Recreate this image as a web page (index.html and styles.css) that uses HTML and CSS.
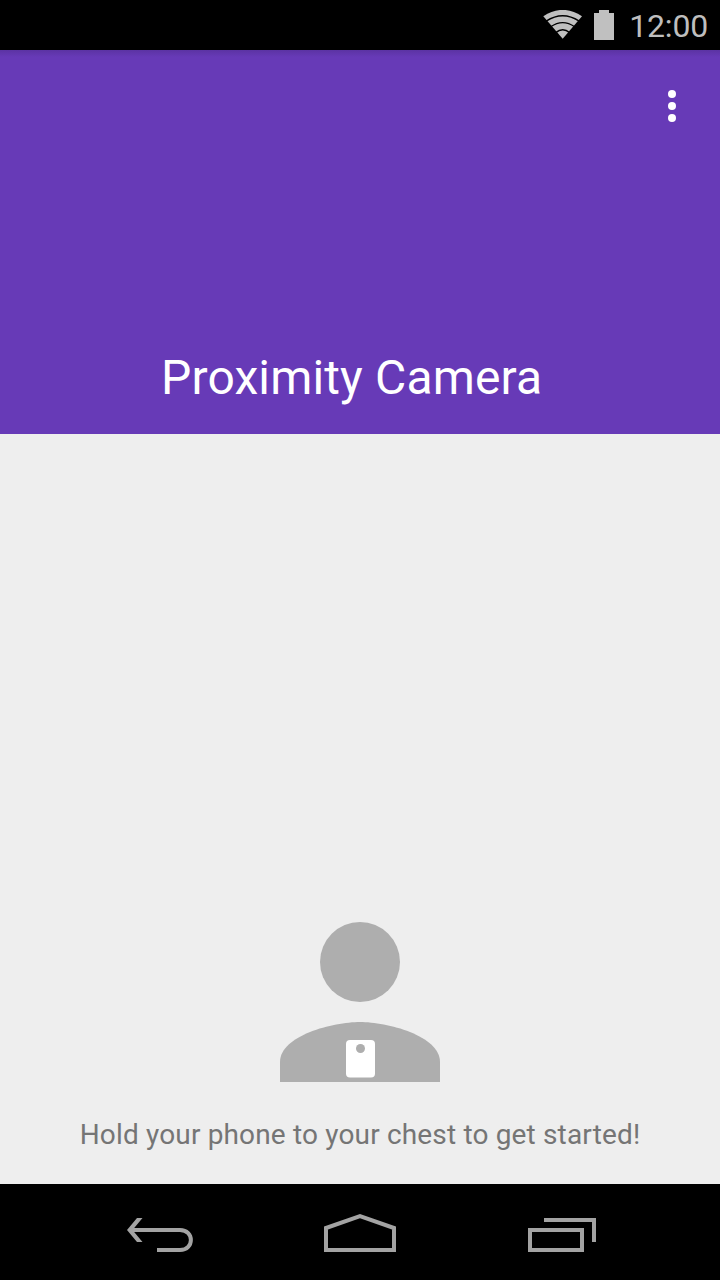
FILE: index.html
```
<!DOCTYPE html>
<html lang="en">
<head>
    <meta charset="UTF-8">
    <meta name="viewport" content="width=device-width, initial-scale=1.0">
    <title>Proximity Camera</title>
    <link rel="stylesheet" href="styles.css">
</head>
<body>
    <div class="status-bar">
        <svg class="wifi" width="40" height="30" viewBox="0 0 40 30">
            <path class="signal" d="M19.7 28.8 L0.3 6.3 Q19.7 -6.6 39 6.3 Z"/>
            <path class="gap" d="M3.2 11.2 Q19.7 0.4 36.2 11.2 M7.7 16.8 Q19.7 8.4 31.7 16.8 M12.7 22.6 Q19.7 17 26.7 22.6"/>
        </svg>
        <svg class="battery" width="20" height="30" viewBox="0 0 20 30">
            <path class="signal" d="M5 0 H15 V3 H20 V30 H0 V3 H5 Z"/>
        </svg>
        <span class="clock">12:00</span>
    </div>

    <header class="app-bar">
        <button class="menu-button" aria-label="More options">
            <svg width="8" height="32" viewBox="0 0 8 32">
                <circle cx="4" cy="4" r="4"/>
                <circle cx="4" cy="16" r="4"/>
                <circle cx="4" cy="28" r="4"/>
            </svg>
        </button>
        <h1>Proximity Camera</h1>
    </header>

    <main class="content">
        <svg class="person" width="160" height="160" viewBox="0 0 160 160">
            <circle class="body-shape" cx="80" cy="40" r="40"/>
            <path class="body-shape" d="M80 100 C53.3 100 0 113.4 0 140 V160 H160 V140 C160 113.4 106.7 100 80 100 Z"/>
            <rect class="phone" x="66" y="118" width="29" height="37.5" rx="4"/>
            <circle class="body-shape" cx="80.5" cy="126.5" r="4.5"/>
        </svg>
        <p class="hint">Hold your phone to your chest to get started!</p>
    </main>

    <nav class="nav-bar">
        <svg width="66" height="40" viewBox="0 0 66 40">
            <path class="filled" d="M0 18 L10 6 H15.5 L5.5 18 L15.5 30 H10 Z"/>
            <path d="M4 18 H53 C67.5 18 67.5 38 53 38 H30"/>
        </svg>
        <svg width="72" height="40" viewBox="0 0 72 40">
            <path d="M2 38 V16 L36 4.1 L70 16 V38 Z"/>
        </svg>
        <svg width="68" height="40" viewBox="0 0 68 40">
            <rect x="2" y="18" width="52" height="20"/>
            <path d="M16 8 H66 V30"/>
        </svg>
    </nav>
</body>
</html>
```

FILE: styles.css
```
* {
    box-sizing: border-box;
}

body {
    font-family: Roboto, "Liberation Sans", sans-serif;
    margin: 0;
    height: 100vh;
    display: flex;
    flex-direction: column;
    background-color: #eeeeee;
    overflow: hidden;
}

svg {
    display: block;
}

.status-bar {
    flex: none;
    height: 50px;
    display: flex;
    justify-content: flex-end;
    align-items: center;
    padding-right: 12px;
    background-color: #000;
}

.wifi {
    margin-right: 11px;
}

.battery {
    margin-right: 15px;
}

.signal {
    fill: #c0c0c0;
}

.gap {
    fill: none;
    stroke: #000;
    stroke-width: 1.4;
}

.clock {
    color: #bebebe;
    font-size: 32px;
    line-height: 50px;
    letter-spacing: -0.2px;
    padding-top: 2px;
}

.app-bar {
    flex: none;
    height: 384px;
    display: flex;
    flex-direction: column;
    justify-content: space-between;
    padding: 40px 44px 28px;
    color: white;
    background: linear-gradient(#5b33a3, #673ab7 7px);
}

.menu-button {
    align-self: flex-end;
    padding: 0;
    border: none;
    background: none;
    cursor: pointer;
}

.menu-button circle {
    fill: white;
}

h1 {
    margin: 0 0 0 117px;
    font-size: 48px;
    font-weight: 400;
    line-height: 56px;
    letter-spacing: 0.15px;
    white-space: nowrap;
}

.content {
    flex: 1;
    display: flex;
    flex-direction: column;
    justify-content: flex-end;
    align-items: center;
    padding-bottom: 32px;
}

.body-shape {
    fill: #aeaeae;
}

.phone {
    fill: white;
}

.hint {
    margin: 36px 0 0;
    color: #757575;
    font-size: 28px;
    line-height: 34px;
    letter-spacing: 0.16px;
    white-space: nowrap;
}

.nav-bar {
    flex: none;
    height: 96px;
    display: flex;
    justify-content: space-between;
    padding: 28px 124px 0 127px;
    background-color: #000;
}

.nav-bar svg {
    fill: none;
    stroke: #a3a3a3;
    stroke-width: 4;
}

.nav-bar svg:nth-child(2) {
    margin-right: 2px;
}

.nav-bar .filled {
    fill: #a3a3a3;
    stroke: none;
}
```
